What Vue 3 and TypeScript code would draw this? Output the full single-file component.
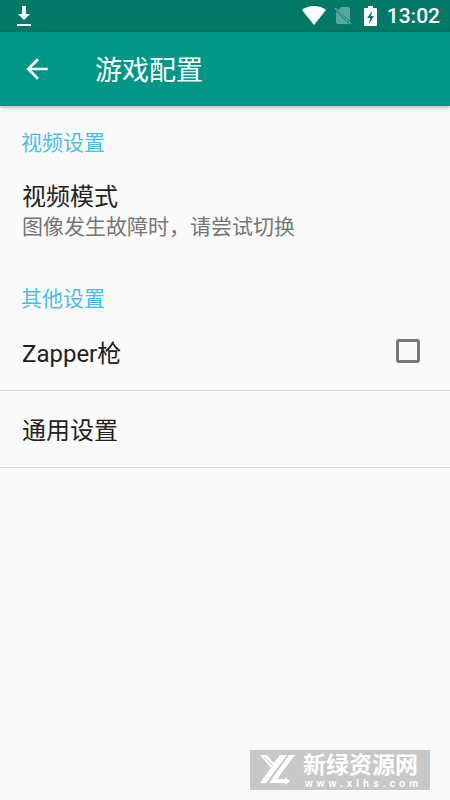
<script setup lang="ts">
import { ref } from 'vue'

const time = ref('13:02')
const zapper = ref(false)
</script>

<template>
  <div class="screen">
    <div class="status">
      <svg class="download" viewBox="0 0 16 20" width="16" height="20" aria-hidden="true">
        <path d="M6 0h4v8h4l-6 6-6-6h4zM1 18h14v2H1z" fill="#fff" />
      </svg>
      <div class="indicators">
        <svg class="wifi" viewBox="0 0 24 20" width="24" height="20" aria-hidden="true">
          <path d="M0 4Q5 0 12 0t12 4L12 19z" fill="#fff" />
        </svg>
        <svg class="signal" viewBox="0 0 18 20" width="18" height="20" aria-hidden="true">
          <path d="M7 1h7q2 0 2 2v12L4 4zM2 5l13 13H4q-2 0-2-2z" fill="#fff" opacity=".35" />
          <path d="M1 2l16 16" stroke="#fff" stroke-width="1.5" opacity=".35" />
        </svg>
        <svg class="battery" viewBox="0 0 13 20" width="13" height="20" aria-hidden="true">
          <path d="M4 0h5v2h3q1 0 1 1v16q0 1-1 1H1q-1 0-1-1V3q0-1 1-1h3z" fill="#fff" />
          <path d="M8 5L3 12h3l-1 6 5-8H7z" fill="#047866" />
        </svg>
        <span class="time">{{ time }}</span>
      </div>
    </div>

    <header class="toolbar">
      <button class="back" type="button" aria-label="返回">
        <svg viewBox="0 0 24 24" width="32" height="32" aria-hidden="true">
          <path d="M20 11H7.83l5.59-5.59L12 4l-8 8 8 8 1.41-1.41L7.83 13H20z" fill="#fff" />
        </svg>
      </button>
      <h1>游戏配置</h1>
    </header>

    <main>
      <section>
        <h2>视频设置</h2>
        <button class="row" type="button">
          <span class="name">视频模式</span>
          <span class="summary">图像发生故障时，请尝试切换</span>
        </button>
      </section>
      <section>
        <h2>其他设置</h2>
        <label class="row check ruled" for="zapper">
          <span class="name">Zapper枪</span>
          <input id="zapper" v-model="zapper" type="checkbox" />
        </label>
        <button class="row ruled" type="button">
          <span class="name">通用设置</span>
        </button>
      </section>
    </main>

    <aside class="mark">
      <svg viewBox="0 0 36 30" width="36" height="30" aria-hidden="true">
        <path d="M0 0h7l7 8 6-8h7L6 28H0l11-15z" fill="#fff" />
        <path d="M4 2l9 9" stroke="#c8c8c8" stroke-width="1" />
        <path d="M29 0h6L17 24h8v-2l5 4-5 4v-2H9z" fill="#fff" />
      </svg>
      <div class="brand">
        <strong>新绿资源网</strong>
        <span>www.xlhs.com</span>
      </div>
    </aside>
  </div>
</template>

<style>
body {
  background: #fafafa;
}
</style>

<style scoped>
.screen {
  min-height: 100vh;
  background: #fafafa;
  color: #212121;
  font-family: Roboto, "Noto Sans CJK SC", sans-serif;
}
.status {
  display: flex;
  align-items: center;
  justify-content: space-between;
  height: 32px;
  padding: 0 10px 0 16px;
  background: #047866;
}
.indicators {
  display: flex;
  align-items: center;
}
.signal {
  margin-left: 8px;
}
.battery {
  margin: 0 10px 0 12px;
}
.time {
  color: #fff;
  font-size: 21px;
  font-weight: 500;
  line-height: 32px;
}
.toolbar {
  display: flex;
  align-items: center;
  gap: 42px;
  height: 74px;
  padding: 0 21px;
  background: #009788;
  box-shadow: 0 1px 4px rgba(0, 0, 0, 0.35);
}
main {
  padding-top: 2px;
}
button {
  border: 0;
  padding: 0;
  background: none;
  color: inherit;
  font: inherit;
  text-align: left;
}
.back,
.back svg {
  display: block;
}
h1 {
  margin: 0;
  padding-top: 3px;
  color: #fff;
  font-size: 27px;
  font-weight: 400;
  line-height: 36px;
}
h2 {
  margin: 0;
  padding: 20px 21px 0;
  color: #4bbdeb;
  font-size: 21px;
  font-weight: 400;
  line-height: 30px;
}
.row {
  display: block;
  box-sizing: border-box;
  width: 100%;
  padding: 24px 22px 22px;
}
.ruled {
  padding-top: 25px;
  padding-bottom: 21px;
  border-bottom: 1px solid #dadada;
}
.check {
  display: flex;
  align-items: flex-start;
  justify-content: space-between;
  padding-right: 30px;
}
.name,
.summary {
  display: block;
  line-height: 30px;
}
.name {
  font-size: 24px;
}
.summary {
  color: #757575;
  font-size: 21px;
}
input {
  appearance: none;
  box-sizing: border-box;
  width: 24px;
  height: 24px;
  margin: 0;
  border: 3px solid #777;
  border-radius: 3px;
}
input:checked {
  background: #009788;
}
.mark {
  position: fixed;
  right: 20px;
  bottom: 10px;
  display: flex;
  align-items: center;
  gap: 7px;
  box-sizing: border-box;
  width: 180px;
  height: 40px;
  padding-left: 10px;
  background: #c8c8c8;
  color: #fff;
}
.brand {
  display: flex;
  flex-direction: column;
}
.brand strong {
  font-size: 23px;
  font-weight: 700;
  line-height: 27px;
}
.brand span {
  padding-left: 2px;
  font-family: "Liberation Sans", sans-serif;
  font-size: 10px;
  font-weight: 700;
  letter-spacing: 4px;
  line-height: 10px;
}
</style>
